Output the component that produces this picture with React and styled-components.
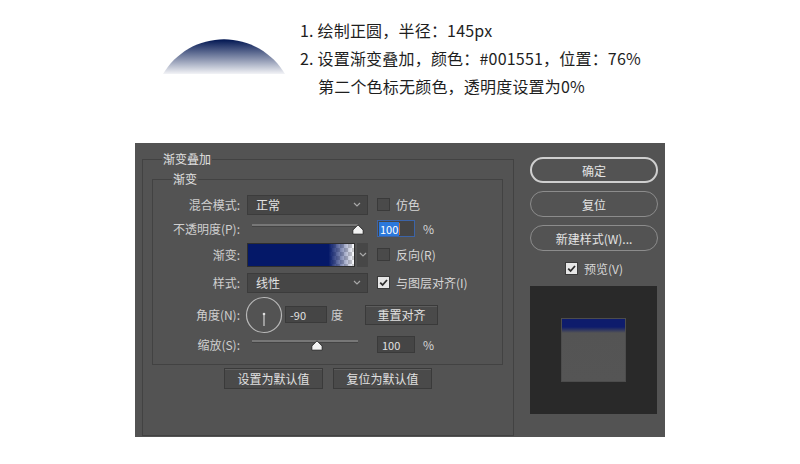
import React from "react"
import styled, { createGlobalStyle } from "styled-components"

const GlobalStyle = createGlobalStyle`
  html, body {
    margin: 0;
    padding: 0;
    background: #fff;
  }
  body {
    font-family: "Noto Sans CJK SC", "Noto Sans", sans-serif;
  }
`

const Page = styled.div`
  width: 800px;
  height: 464px;
  background: #fff;
  overflow: hidden;
`

const Intro = styled.section`
  display: flex;
  align-items: flex-start;
  height: 143px;
  box-sizing: border-box;
  padding: 16px 0 0 163px;
`

const Cap = styled.svg`
  flex: none;
  margin-top: 22px;
`

const Steps = styled.ol`
  margin: 0 0 0 15px;
  padding: 0;
  list-style: none;
  font-size: 16px;
  line-height: 28px;
  letter-spacing: 0.2px;
  color: #1e1e1e;
`

const Step = styled.li`
  padding-left: ${(p) => (p.$indent ? "18px" : "0")};
  white-space: nowrap;
`

const Dialog = styled.div`
  margin-left: 135px;
  width: 530px;
  height: 294px;
  box-sizing: border-box;
  padding: 8px 0 0 7px;
  background: #535353;
  display: flex;
  font-size: 12px;
  color: #d6d6d6;
`

const Group = styled.fieldset`
  margin: 0;
  padding: 0;
  min-width: 0;
  border: 1px solid #424242;
  box-sizing: border-box;
`

const OuterGroup = styled(Group)`
  width: 372px;
  height: 285px;
  flex: none;
`

const InnerGroup = styled(Group)`
  margin: 4px 10px 0 9px;
  padding: 6px 0 7px 0;
`

const Legend = styled.legend`
  margin-left: 19px;
  padding: 0 1px;
  line-height: 16px;
  font-size: 12px;
  color: #e0e0e0;
`

const Row = styled.div`
  display: flex;
  align-items: center;
  height: ${(p) => p.$h}px;
`

const Label = styled.span`
  flex: none;
  width: 87px;
  margin-right: 7px;
  text-align: right;
  white-space: nowrap;
  color: #cfcfcf;
`

const Control = styled.div`
  flex: none;
  width: 121px;
  display: flex;
  align-items: center;
`

const Extra = styled.div`
  margin-left: 9px;
  display: flex;
  align-items: center;
  gap: ${(p) => p.$gap || 6}px;
  white-space: nowrap;
`

const Select = styled.div`
  width: 100%;
  height: 20px;
  box-sizing: border-box;
  background: #464646;
  border: 1px solid #3c3c3c;
  display: flex;
  align-items: center;
  justify-content: space-between;
  padding: 0 6px 0 8px;
  color: #e2e2e2;
`

const Chevron = () => (
  <svg width="8" height="5" viewBox="0 0 8 5">
    <path d="M1 1 L4 4 L7 1" fill="none" stroke="#a8a8a8" strokeWidth="1.2" />
  </svg>
)

const SliderBox = styled.div`
  width: 100%;
  height: 18px;
  padding-top: 4px;
  box-sizing: border-box;
`

const Track = styled.div`
  position: relative;
  height: 2px;
  margin: 0 10px 0 5px;
  background: #777;
  border-bottom: 1px solid #444;
`

const Thumb = styled.svg`
  position: absolute;
  top: 0;
  transform: translateX(-50%);
`

function Slider({ value }) {
  return (
    <SliderBox>
      <Track>
        <Thumb width="12" height="11" viewBox="0 0 12 11" style={{ left: `${value}%` }}>
          <path d="M6 0.8 L11.2 6 L11.2 10.2 L0.8 10.2 L0.8 6 Z" fill="#f2f2f2" stroke="#2b2b2b" strokeWidth="1" />
        </Thumb>
      </Track>
    </SliderBox>
  )
}

const Field = styled.div`
  flex: none;
  width: ${(p) => p.$w}px;
  height: 17px;
  box-sizing: border-box;
  background: #454545;
  border: 1px solid ${(p) => (p.$focus ? "#3c64a8" : "#3a3a3a")};
  display: flex;
  align-items: center;
  padding-left: 1px;
  font-size: 11px;
  color: #e0e0e0;
`

const Selected = styled.span`
  background: #2b78dc;
  color: #fff;
  padding: 0 1px;
  line-height: 14px;
`

const Caret = styled.span`
  width: 1px;
  height: 12px;
  background: #c46a2a;
`

const FieldText = styled.span`
  padding-left: 3px;
`

const GradientBar = styled.div`
  width: 108px;
  height: 24px;
  box-sizing: border-box;
  border: 1px solid #2e2e2e;
  background:
    linear-gradient(to right, #041868 0%, #041868 76%, rgba(4, 24, 104, 0) 100%),
    repeating-conic-gradient(#d0d0d0 0 25%, #ffffff 0 50%) 0 0 / 8px 8px;
`

const GradientArrow = styled.div`
  margin-left: 2px;
  width: 11px;
  height: 24px;
  background: #474747;
  display: flex;
  align-items: center;
  justify-content: center;
`

const Box = styled.span`
  flex: none;
  width: 13px;
  height: 13px;
  box-sizing: border-box;
  border: 1px solid #3a3a3a;
  background: ${(p) => (p.$checked ? "#e6e6e6" : "#4a4a4a")};
  display: inline-flex;
  align-items: center;
  justify-content: center;
`

function Check({ checked, children }) {
  return (
    <>
      <Box $checked={checked}>
        {checked && (
          <svg width="11" height="11" viewBox="0 0 11 11">
            <polyline points="2.2,5.6 4.6,8 9,3" fill="none" stroke="#2d2d2d" strokeWidth="1.8" />
          </svg>
        )}
      </Box>
      <span>{children}</span>
    </>
  )
}

const Dial = styled.svg`
  flex: none;
  margin-left: -2px;
`

const Unit = styled.span`
  margin-left: ${(p) => p.$ml}px;
  color: #d0d0d0;
`

const RectButton = styled.div`
  flex: none;
  width: ${(p) => p.$w}px;
  height: ${(p) => p.$h || 20}px;
  margin-left: ${(p) => p.$ml || 0}px;
  box-sizing: border-box;
  background: #4a4a4a;
  border: 1px solid #3a3a3a;
  box-shadow: inset 0 1px 0 #5d5d5d;
  display: flex;
  align-items: center;
  justify-content: center;
  color: #e0e0e0;
`

const Defaults = styled.div`
  display: flex;
  justify-content: center;
  gap: 10px;
  margin-top: 3px;
`

const Side = styled.div`
  margin-left: 16px;
  width: 128px;
  padding-top: 6px;
  display: flex;
  flex-direction: column;
`

const Pill = styled.div`
  height: 26px;
  margin-bottom: 8px;
  box-sizing: border-box;
  border-radius: 13px;
  border: ${(p) => (p.$primary ? "2px solid #cfcfcf" : "1px solid #8c8c8c")};
  display: flex;
  align-items: center;
  justify-content: center;
  color: #e4e4e4;
  font-size: 12px;
`

const PreviewToggle = styled.div`
  height: 20px;
  margin-top: -1px;
  display: flex;
  align-items: center;
  justify-content: center;
  gap: 6px;
`

const Preview = styled.div`
  margin-top: 8px;
  width: 127px;
  height: 128px;
  background: #292929;
  display: flex;
  align-items: center;
  justify-content: center;
`

const Swatch = styled.div`
  width: 65px;
  height: 64px;
  box-sizing: border-box;
  border: 1px solid #4c4c4c;
  background: linear-gradient(to bottom, #0e1c6c 0px, #0e1c6c 8px, #545454 14px, #555 100%);
`

export default function App() {
  return (
    <Page>
      <GlobalStyle />
      <Intro>
        <Cap width="122" height="36" viewBox="0 0 122 36">
          <defs>
            <linearGradient id="capFill" x1="0" y1="0" x2="0" y2="1">
              <stop offset="0" stopColor="#001551" stopOpacity="1" />
              <stop offset="1" stopColor="#001551" stopOpacity="0.05" />
            </linearGradient>
          </defs>
          <path d="M0 36 A71 71 0 0 1 122 36 Z" fill="url(#capFill)" />
        </Cap>
        <Steps>
          <Step>1. 绘制正圆，半径：145px</Step>
          <Step>2. 设置渐变叠加，颜色：#001551，位置：76%</Step>
          <Step $indent>第二个色标无颜色，透明度设置为0%</Step>
        </Steps>
      </Intro>

      <Dialog>
        <OuterGroup>
          <Legend>渐变叠加</Legend>
          <InnerGroup>
            <Legend>渐变</Legend>
            <Row $h={23}>
              <Label>混合模式:</Label>
              <Control>
                <Select>
                  <span>正常</span>
                  <Chevron />
                </Select>
              </Control>
              <Extra>
                <Check>仿色</Check>
              </Extra>
            </Row>
            <Row $h={25}>
              <Label>不透明度(P):</Label>
              <Control>
                <Slider value={100} />
              </Control>
              <Extra $gap={8}>
                <Field $w={38} $focus>
                  <Selected>100</Selected>
                  <Caret />
                </Field>
                <span>%</span>
              </Extra>
            </Row>
            <Row $h={27}>
              <Label>渐变:</Label>
              <Control>
                <GradientBar />
                <GradientArrow>
                  <Chevron />
                </GradientArrow>
              </Control>
              <Extra>
                <Check>反向(R)</Check>
              </Extra>
            </Row>
            <Row $h={29}>
              <Label>样式:</Label>
              <Control>
                <Select>
                  <span>线性</span>
                  <Chevron />
                </Select>
              </Control>
              <Extra>
                <Check checked>与图层对齐(I)</Check>
              </Extra>
            </Row>
            <Row $h={35}>
              <Label>角度(N):</Label>
              <Dial width="38" height="38" viewBox="0 0 38 38">
                <circle cx="19" cy="19" r="17.5" fill="none" stroke="#b8b8b8" strokeWidth="1.2" />
                <line x1="19" y1="18" x2="19" y2="30" stroke="#cfcfcf" strokeWidth="1.2" />
                <circle cx="19" cy="18" r="1.3" fill="#e0e0e0" />
              </Dial>
              <Field $w={42} style={{ marginLeft: 2 }}>
                <FieldText>-90</FieldText>
              </Field>
              <Unit $ml={4}>度</Unit>
              <RectButton $w={73} $ml={22}>
                重置对齐
              </RectButton>
            </Row>
            <Row $h={25}>
              <Label>缩放(S):</Label>
              <Control>
                <Slider value={61} />
              </Control>
              <Extra $gap={8}>
                <Field $w={38}>
                  <FieldText>100</FieldText>
                </Field>
                <span>%</span>
              </Extra>
            </Row>
          </InnerGroup>
          <Defaults>
            <RectButton $w={99} $h={21}>
              设置为默认值
            </RectButton>
            <RectButton $w={99} $h={21}>
              复位为默认值
            </RectButton>
          </Defaults>
        </OuterGroup>

        <Side>
          <Pill $primary>确定</Pill>
          <Pill>复位</Pill>
          <Pill>新建样式(W)...</Pill>
          <PreviewToggle>
            <Check checked>预览(V)</Check>
          </PreviewToggle>
          <Preview>
            <Swatch />
          </Preview>
        </Side>
      </Dialog>
    </Page>
  )
}
